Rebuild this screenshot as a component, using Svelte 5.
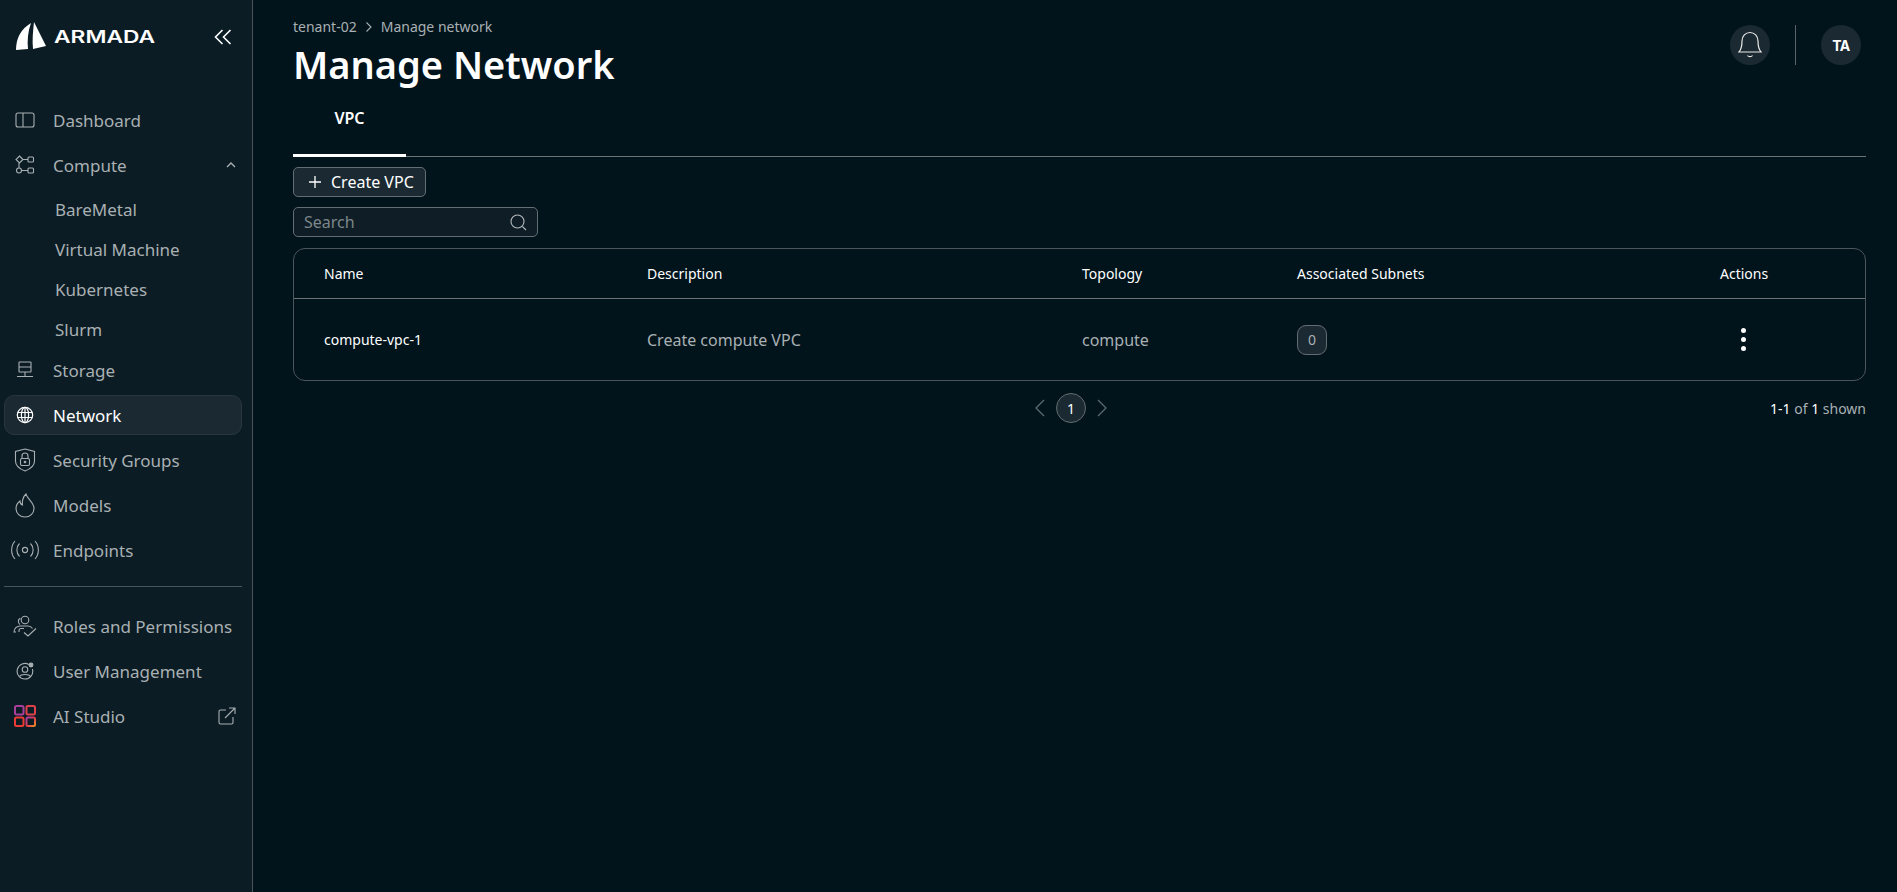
<script>
  const subItems = ["BareMetal", "Virtual Machine", "Kubernetes", "Slurm"];
</script>

<div class="page">
  <aside class="sidebar">
    <div class="brand">
      <div class="logo">
        <svg width="34" height="30" viewBox="0 0 34 30">
          <path d="M1 28C1 16 6 7 16 1C13 9 12 19 13 27Z" fill="#fff" />
          <path d="M19 0C18 9 17 19 18 27L31 24C27 16 23 8 19 0Z" fill="#fff" />
        </svg>
        <span class="wordmark">ARMADA</span>
      </div>
      <svg class="collapse" width="20" height="20" viewBox="0 0 20 20" fill="none" stroke="#fff" stroke-width="1.6">
        <path d="M9.5 3L2.5 10L9.5 17M17.5 3L10.5 10L17.5 17" />
      </svg>
    </div>

    <nav class="nav">
      <div class="item">
        <span class="icon"><svg width="20" height="16" viewBox="0 0 20 16" fill="none" stroke="currentColor" stroke-width="1.1"><rect x="1" y="1" width="18" height="14" rx="2" /><path d="M8 1V15" /></svg></span>
        <span>Dashboard</span>
      </div>
      <div class="item">
        <span class="icon"><svg width="20" height="20" viewBox="0 0 20 20" fill="none" stroke="currentColor" stroke-width="1.1"><path d="M4.5 1L8 4.5L4.5 8L1 4.5Z" /><rect x="13" y="2" width="5.5" height="5" rx="1" /><circle cx="4" cy="15.5" r="2.5" /><rect x="13" y="13" width="5.5" height="5" rx="1" /><path d="M8 4.5H13M6.5 15.5H13M4 8V13" /></svg></span>
        <span>Compute</span>
        <svg class="chev" width="12" height="8" viewBox="0 0 12 8" fill="none" stroke="currentColor" stroke-width="1.4"><path d="M2 6L6 2L10 6" /></svg>
      </div>
      {#each subItems as sub}
        <div class="sub">{sub}</div>
      {/each}
      <div class="item">
        <span class="icon"><svg width="18" height="18" viewBox="0 0 18 18" fill="none" stroke="currentColor" stroke-width="1.1"><rect x="3" y="1" width="12" height="10" rx="0.5" /><path d="M3 6H15M9 11V15M1 15.5H17" /></svg></span>
        <span>Storage</span>
      </div>
      <div class="item active">
        <span class="icon"><svg width="18" height="18" viewBox="0 0 18 18" fill="none" stroke="currentColor" stroke-width="1.2"><circle cx="9" cy="9" r="7.7" /><ellipse cx="9" cy="9" rx="3.6" ry="7.7" /><path d="M9 1.3V16.7M1.6 6.5H16.4M1.6 11.5H16.4" /></svg></span>
        <span>Network</span>
      </div>
      <div class="item">
        <span class="icon"><svg width="22" height="24" viewBox="0 0 22 24" fill="none" stroke="currentColor" stroke-width="1.1"><path d="M11 1L20.5 3.5V13C20.5 18 15 21.5 11 23C7 21.5 1.5 18 1.5 13V3.5Z" /><rect x="6.5" y="10.5" width="9" height="7" rx="1.5" /><path d="M8 10.5V8A3 3 0 0 1 14 8V10.5" /><circle cx="11" cy="14" r="0.8" /></svg></span>
        <span>Security Groups</span>
      </div>
      <div class="item">
        <span class="icon"><svg width="20" height="25" viewBox="0 0 20 25" fill="none" stroke="currentColor" stroke-width="1.1"><path d="M11 1C12 6 19 9 19 15.5C19 20.5 15 24 10 24C5 24 1 20.5 1 15.5C1 12 3 9.5 5 8C5 10 6 11.5 7.5 12C7 8 8 4 11 1Z" /></svg></span>
        <span>Models</span>
      </div>
      <div class="item">
        <span class="icon wide"><svg width="28" height="20" viewBox="0 0 28 20" fill="none" stroke="currentColor" stroke-width="1.1"><circle cx="14" cy="10" r="2.6" /><path d="M8.5 3.5C5 7 5 13 8.5 16.5M19.5 3.5C23 7 23 13 19.5 16.5M4 1C-0.5 6 -0.5 14 4 19M24 1C28.5 6 28.5 14 24 19" /></svg></span>
        <span>Endpoints</span>
      </div>

      <div class="rule"></div>

      <div class="item">
        <span class="icon wide"><svg width="24" height="22" viewBox="0 0 24 22" fill="none" stroke="currentColor" stroke-width="1.1"><circle cx="12" cy="5" r="3.8" /><path d="M7.5 3.5C4.5 4 5 8 7 9.5M3 17H1C1 13.5 4 11 7 11H15C17 11 18.5 12 19.5 13.5M6 17V15.5C6 14 7 13.5 8 13.5H11M11 17.5L15 21L23 13.5" /></svg></span>
        <span>Roles and Permissions</span>
      </div>
      <div class="item">
        <span class="icon"><svg width="18" height="18" viewBox="0 0 18 18" fill="none" stroke="currentColor" stroke-width="1.1"><path d="M13 2.6A7.8 7.8 0 1 0 16.4 7" /><circle cx="9" cy="7.5" r="2.8" /><path d="M3.6 14.5C5 11.8 13 11.8 14.4 14.5" /><circle cx="15" cy="3" r="1.9" fill="currentColor" /></svg></span>
        <span>User Management</span>
      </div>
      <div class="item">
        <span class="icon">
          <svg width="22" height="22" viewBox="0 0 22 22" fill="none" stroke-width="2">
            <defs>
              <linearGradient id="studio" x1="0" y1="0" x2="1" y2="1">
                <stop offset="0" stop-color="#a03fa8" />
                <stop offset="0.5" stop-color="#e23a4c" />
                <stop offset="1" stop-color="#f08a24" />
              </linearGradient>
            </defs>
            <rect x="1" y="1" width="8.5" height="8.5" rx="1.5" stroke="#a83f9c" />
            <rect x="12.5" y="1" width="8.5" height="8.5" rx="1.5" stroke="#e0404c" />
            <rect x="1" y="12.5" width="8.5" height="8.5" rx="1.5" stroke="#ec3b34" />
            <rect x="12.5" y="12.5" width="8.5" height="8.5" rx="1.5" stroke="url(#studio)" />
          </svg>
        </span>
        <span>AI Studio</span>
        <svg class="ext" width="18" height="18" viewBox="0 0 18 18" fill="none" stroke="currentColor" stroke-width="1.1"><path d="M8 3H2.5A1.5 1.5 0 0 0 1 4.5V15.5A1.5 1.5 0 0 0 2.5 17H13.500A1.500 1.500 0 0 0 15 15.500V10M7 11L17 1M11 1H17V7" /></svg>
      </div>
    </nav>
  </aside>

  <main class="main">
    <header class="top">
      <div>
        <div class="crumbs">
          <span>tenant-02</span>
          <svg width="10" height="12" viewBox="0 0 10 12" fill="none" stroke="currentColor" stroke-width="1.1"><path d="M2.500 1.500L7 6L2.500 10.500" /></svg>
          <span>Manage network</span>
        </div>
        <h1>Manage Network</h1>
      </div>
      <div class="top-right">
        <span class="circle">
          <svg width="26" height="28" viewBox="0 0 26 28" fill="none" stroke="#e8e8e8" stroke-width="1.200"><path d="M2 21C4.500 18 5 15 5 10C5 5 8.500 1.500 13 1.500C17.500 1.500 21 5 21 10C21 15 21.500 18 24 21Z" /><path d="M10.500 24.500C11.500 26 14.500 26 15.500 24.500" /></svg>
        </span>
        <span class="vline"></span>
        <span class="circle initials">TA</span>
      </div>
    </header>

    <div class="tabs">
      <div class="tab">VPC</div>
    </div>

    <button class="create">
      <svg width="14" height="14" viewBox="0 0 14 14" fill="none" stroke="#fff" stroke-width="1.300"><path d="M7 1V13M1 7H13" /></svg>
      Create VPC
    </button>

    <div class="search">
      <span>Search</span>
      <svg width="17" height="17" viewBox="0 0 17 17" fill="none" stroke="#b4b9bc" stroke-width="1.100"><circle cx="7.500" cy="7.500" r="6.500" /><path d="M12.300 12.300L16 16" /></svg>
    </div>

    <div class="table">
      <div class="row head">
        <div>Name</div>
        <div>Description</div>
        <div>Topology</div>
        <div>Associated Subnets</div>
        <div>Actions</div>
      </div>
      <div class="row body">
        <div class="name">compute-vpc-1</div>
        <div>Create compute VPC</div>
        <div>compute</div>
        <div><span class="count">0</span></div>
        <div class="dots"><i></i><i></i><i></i></div>
      </div>
    </div>

    <div class="footer">
      <div class="pager">
        <svg width="14" height="20" viewBox="0 0 14 20" fill="none" stroke="#5b6a70" stroke-width="1.300"><path d="M11 2L3 10L11 18" /></svg>
        <span class="page-num">1</span>
        <svg width="14" height="20" viewBox="0 0 14 20" fill="none" stroke="#5b6a70" stroke-width="1.300"><path d="M3 2L11 10L3 18" /></svg>
      </div>
      <div class="shown"><b>1-1</b> of <b>1</b> shown</div>
    </div>
  </main>
</div>

<style>
  :global(body) {
    margin: 0;
    background: #01141c;
    font-family: "Noto Sans", "Open Sans", sans-serif;
  }
  .page {
    display: flex;
    min-height: 892px;
    background: #01141c;
  }
  .sidebar {
    width: 253px;
    flex: none;
    box-sizing: border-box;
    background: #0b1c24;
    border-right: 1px solid #4a5559;
    padding: 0 10px 0 4px;
    color: #a9b0b3;
  }
  .brand {
    display: flex;
    align-items: center;
    justify-content: space-between;
    height: 74px;
    padding: 0 9px 0 11px;
  }
  .logo {
    display: flex;
    align-items: center;
    gap: 5px;
  }
  .wordmark {
    display: inline-block;
    color: #fff;
    font-family: Inter, sans-serif;
    font-weight: 600;
    font-size: 17px;
    line-height: 20px;
    transform: scaleX(1.34);
    transform-origin: left center;
  }
  .nav {
    display: flex;
    flex-direction: column;
    padding-top: 26px;
  }
  .item {
    display: flex;
    align-items: center;
    height: 40px;
    margin-bottom: 5px;
    font-size: 17px;
    box-sizing: border-box;
    border: 1px solid transparent;
    border-radius: 10px;
  }
  .icon {
    width: 40px;
    margin-right: 8px;
    flex: none;
    display: flex;
    justify-content: center;
    margin-left: 0;
  }
  .item .chev {
    margin-left: auto;
    margin-right: 4px;
  }
  .item .ext {
    margin-left: auto;
    margin-right: 5px;
  }
  .sub {
    height: 40px;
    line-height: 40px;
    padding-left: 51px;
    font-size: 17px;
  }
  .sub:last-of-type {
    margin-bottom: 5px;
  }
  .active {
    background: #1b2a32;
    border-color: #29363d;
    color: #fff;
  }
  .rule {
    height: 1px;
    background: #4a5559;
    margin: 11px 0 19px;
  }
  .main {
    flex: 1;
    min-width: 0;
    padding: 16px 31px 0 40px;
    color: #fff;
  }
  .top {
    display: flex;
    justify-content: space-between;
    height: 74px;
  }
  .crumbs {
    display: flex;
    align-items: center;
    gap: 7px;
    font-size: 14px;
    line-height: 22px;
    color: #a9b0b3;
  }
  h1 {
    margin: 0;
    font-size: 38px;
    line-height: 52px;
    font-weight: 600;
    color: #fff;
  }
  .top-right {
    display: flex;
    align-items: center;
    height: 40px;
    margin-top: 9px;
    margin-right: 5px;
  }
  .circle {
    width: 40px;
    height: 40px;
    border-radius: 50%;
    background: #1b2a32;
    display: flex;
    align-items: center;
    justify-content: center;
  }
  .initials {
    font-family: Inter, sans-serif;
    font-size: 14px;
    font-weight: 700;
    letter-spacing: -0.5px;
  }
  .vline {
    width: 1px;
    height: 40px;
    background: #5a6468;
    margin: 0 25px;
  }
  .tabs {
    height: 67px;
    box-sizing: border-box;
    border-bottom: 1px solid #6c7477;
  }
  .tab {
    width: 113px;
    height: 67px;
    box-sizing: border-box;
    border-bottom: 3px solid #fff;
    text-align: center;
    font-size: 16px;
    font-weight: 600;
    line-height: 56px;
  }
  .create {
    display: flex;
    align-items: center;
    gap: 9px;
    height: 30px;
    width: 133px;
    margin-top: 10px;
    padding: 0 0 0 14px;
    box-sizing: border-box;
    background: #1b2a32;
    border: 1px solid #646d71;
    border-radius: 5px;
    color: #fff;
    font: inherit;
    font-size: 16px;
  }
  .search {
    display: flex;
    align-items: center;
    justify-content: space-between;
    width: 245px;
    height: 30px;
    margin-top: 10px;
    padding: 0 10px;
    box-sizing: border-box;
    background: #0f1e26;
    border: 1px solid #646d71;
    border-radius: 5px;
    color: #7d878b;
    font-size: 16px;
  }
  .table {
    margin-top: 11px;
    border: 1px solid #4c565a;
    border-radius: 12px;
  }
  .row {
    display: grid;
    grid-template-columns: 323px 435px 215px 423px 1fr;
    padding-left: 30px;
    align-items: center;
  }
  .head {
    height: 49px;
    border-bottom: 1px solid #6c7477;
    font-size: 14px;
  }
  .body {
    height: 81px;
    color: #a9b0b3;
    font-size: 16px;
  }
  .name {
    color: #fff;
    font-size: 14px;
  }
  .count {
    display: inline-flex;
    align-items: center;
    justify-content: center;
    width: 30px;
    height: 30px;
    box-sizing: border-box;
    background: #1b2a32;
    border: 1px solid #646d71;
    border-radius: 9px;
    font-size: 14px;
  }
  .dots {
    display: flex;
    flex-direction: column;
    gap: 4px;
    padding-left: 21px;
  }
  .dots i {
    display: block;
    width: 5px;
    height: 5px;
    border-radius: 50%;
    background: #fff;
  }
  .footer {
    position: relative;
    display: flex;
    justify-content: flex-end;
    align-items: center;
    height: 30px;
    margin-top: 12px;
  }
  .pager {
    position: absolute;
    left: 740px;
    display: flex;
    align-items: center;
    gap: 9px;
  }
  .page-num {
    width: 30px;
    height: 30px;
    box-sizing: border-box;
    border: 1px solid #646d71;
    border-radius: 50%;
    background: #1b2a32;
    display: flex;
    align-items: center;
    justify-content: center;
    font-size: 14px;
  }
  .shown {
    font-size: 14px;
    color: #a9b0b3;
  }
  .shown b {
    color: #fff;
    font-weight: 400;
  }
</style>
